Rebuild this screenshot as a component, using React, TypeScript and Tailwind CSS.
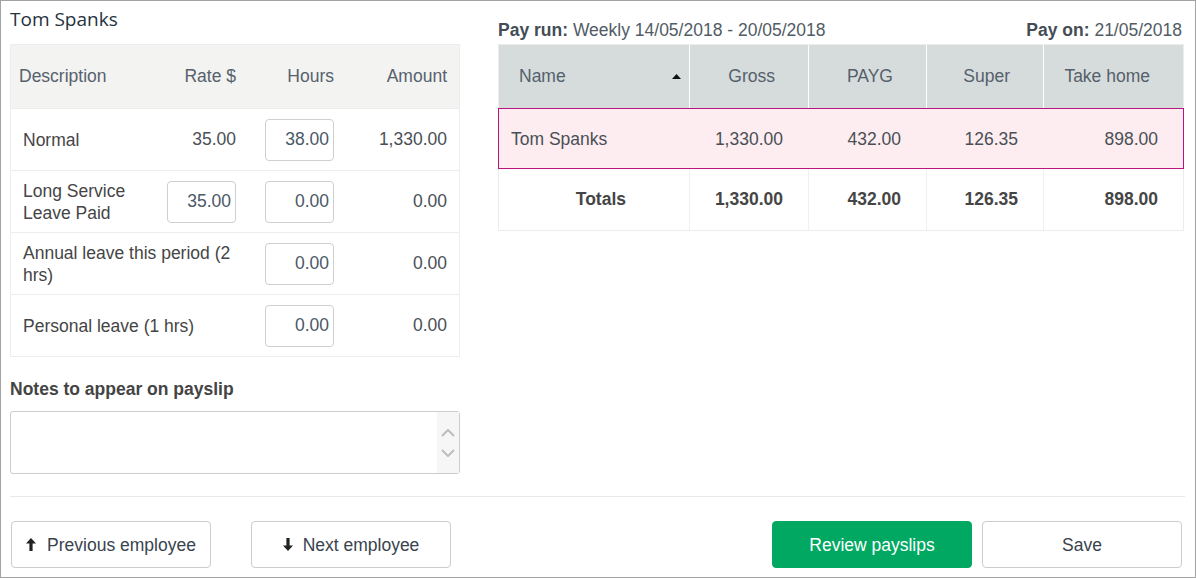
import React from 'react';

const font = { fontFamily: '"Liberation Sans", Arial, sans-serif' };

type PayItem = {
  label: string;
  rate?: string;
  rateInput?: boolean;
  hours: string;
  amount: string;
};

const items: PayItem[] = [
  { label: 'Normal', rate: '35.00', hours: '38.00', amount: '1,330.00' },
  { label: 'Long Service Leave Paid', rate: '35.00', rateInput: true, hours: '0.00', amount: '0.00' },
  { label: 'Annual leave this period (2 hrs)', hours: '0.00', amount: '0.00' },
  { label: 'Personal leave (1 hrs)', hours: '0.00', amount: '0.00' },
];

function NumberBox({ value }: { value: string }) {
  return (
    <div className="w-[69px] h-[42px] border border-[#cfcfcf] rounded-[4px] bg-white flex items-center justify-end pr-[4px] text-[#4b5866]">
      {value}
    </div>
  );
}

function ArrowUp() {
  return (
    <svg width="10" height="13" viewBox="0 0 10 13" className="fill-[#222]">
      <path d="M5 0 L10 5.5 H6.6 V13 H3.4 V5.5 H0 Z" />
    </svg>
  );
}

function ArrowDown() {
  return (
    <svg width="10" height="13" viewBox="0 0 10 13" className="fill-[#222]">
      <path d="M5 13 L10 7.5 H6.6 V0 H3.4 V7.5 H0 Z" />
    </svg>
  );
}

function PayItemsTable() {
  return (
    <div className="border border-[#ededed] text-[17.5px]">
      <div className="grid grid-cols-[140px_95px_100px_113px] h-[63px] bg-[#f3f3f2] items-center text-[#56616c]">
        <div className="pl-[8px]">Description</div>
        <div className="text-right pr-[10px]">Rate $</div>
        <div className="text-right pr-[12px]">Hours</div>
        <div className="text-right pr-[12px]">Amount</div>
      </div>
      {items.map(item => (
        <div
          key={item.label}
          className="grid grid-cols-[140px_95px_100px_113px] h-[62px] border-t border-[#ededed] items-center text-[#454545]"
        >
          {item.rate ? (
            <>
              <div className="pl-[12px] pr-[8px] leading-[22px]">{item.label}</div>
              <div className="flex justify-end pr-[10px] text-[#4a4f56]">
                {item.rateInput ? <NumberBox value={item.rate} /> : item.rate}
              </div>
            </>
          ) : (
            <div className="col-span-2 pl-[12px] pr-[8px] leading-[22px]">{item.label}</div>
          )}
          <div className="flex justify-end pr-[12px]">
            <NumberBox value={item.hours} />
          </div>
          <div className="text-right pr-[12px] text-[#4a4f56]">{item.amount}</div>
        </div>
      ))}
    </div>
  );
}

function NotesBox() {
  return (
    <div className="relative mt-[9px] h-[63px] border border-[#cccccc] rounded-[3px] bg-white">
      <div className="absolute right-0 top-0 bottom-0 w-[22px] bg-[#f6f6f6] flex flex-col items-center justify-center gap-[12px]">
        <svg width="14" height="8" viewBox="0 0 14 8">
          <path d="M1 7 L7 1 L13 7" stroke="#bdbdbd" strokeWidth="2" fill="none" />
        </svg>
        <svg width="14" height="8" viewBox="0 0 14 8">
          <path d="M1 1 L7 7 L13 1" stroke="#bdbdbd" strokeWidth="2" fill="none" />
        </svg>
      </div>
    </div>
  );
}

const runCols = 'grid grid-cols-[190px_119px_118px_117px_140px]';

function PayRunTable() {
  return (
    <div className="border border-[#ececec] text-[17.5px]">
      <div className={`${runCols} h-[63px] bg-[#d6dcdc] text-[#55606b] items-center`}>
        <div className="h-full flex items-center justify-between pl-[20px] pr-[8px]">
          <span>Name</span>
          <svg width="9" height="5" viewBox="0 0 9 5">
            <path d="M4.5 0 L9 5 H0 Z" fill="#111" />
          </svg>
        </div>
        {['Gross', 'PAYG', 'Super', 'Take home'].map(h => (
          <div key={h} className="h-full flex items-center justify-end pr-[33px] border-l border-white">
            {h}
          </div>
        ))}
      </div>
      <div className={`${runCols} h-[61px] bg-[#fdedf0] border border-[#b8167e] -mx-px items-center text-[#4a4f56]`}>
        <div className="pl-[12px] pt-[1px]">Tom Spanks</div>
        <div className="text-right pr-[25px] pt-[1px]">1,330.00</div>
        <div className="text-right pr-[25px] pt-[1px]">432.00</div>
        <div className="text-right pr-[25px] pt-[1px]">126.35</div>
        <div className="text-right pr-[25px] pt-[1px]">898.00</div>
      </div>
      <div className={`${runCols} h-[61px] font-bold text-[#454545]`}>
        <div className="flex items-center justify-end pr-[63px]">Totals</div>
        <div className="flex items-center justify-end pr-[25px] border-l border-[#f0f0f0]">1,330.00</div>
        <div className="flex items-center justify-end pr-[25px] border-l border-[#f0f0f0]">432.00</div>
        <div className="flex items-center justify-end pr-[25px] border-l border-[#f0f0f0]">126.35</div>
        <div className="flex items-center justify-end pr-[25px] border-l border-[#f0f0f0]">898.00</div>
      </div>
    </div>
  );
}

export default function App() {
  return (
    <div
      className="w-[1196px] h-[578px] border border-[#a3a3a3] bg-white flex flex-col px-[9px] overflow-hidden"
      style={font}
    >
      <div className="flex gap-[38px]">
        <div className="w-[450px] shrink-0">
          <div
            className="h-[43px] pt-[4px] text-[19px] text-[#26323d]"
            style={{ fontFamily: '"Open Sans", "Noto Sans", sans-serif' }}
          >
            Tom Spanks
          </div>
          <PayItemsTable />
          <div className="mt-[19px] text-[17.5px] font-bold text-[#444]">Notes to appear on payslip</div>
          <NotesBox />
        </div>
        <div className="flex-1 mr-[3px]">
          <div className="h-[43px] pt-[16px] pr-[2px] flex justify-between text-[17.5px] text-[#515c66]">
            <div>
              <span className="font-bold text-[#444d55]">Pay run:</span> Weekly 14/05/2018 - 20/05/2018
            </div>
            <div>
              <span className="font-bold text-[#444d55]">Pay on:</span> 21/05/2018
            </div>
          </div>
          <PayRunTable />
        </div>
      </div>
      <div className="mt-[22px] border-t border-[#e9e9e9] mr-[1px]" />
      <div className="mt-[24px] flex items-center text-[17.5px]">
        <button className="w-[200px] h-[47px] ml-[1px] border border-[#cccccc] rounded-[4px] bg-white flex items-center justify-center gap-[11px] text-[#38434e]">
          <ArrowUp />
          Previous employee
        </button>
        <button className="w-[200px] h-[47px] ml-[40px] border border-[#cccccc] rounded-[4px] bg-white flex items-center justify-center gap-[10px] text-[#38434e]">
          <ArrowDown />
          Next employee
        </button>
        <button className="w-[200px] h-[47px] ml-auto border border-[#00a862] rounded-[4px] bg-[#00a862] text-white">
          Review payslips
        </button>
        <button className="w-[200px] h-[47px] ml-[10px] mr-[4px] border border-[#cccccc] rounded-[4px] bg-white text-[#38434e]">
          Save
        </button>
      </div>
    </div>
  );
}
